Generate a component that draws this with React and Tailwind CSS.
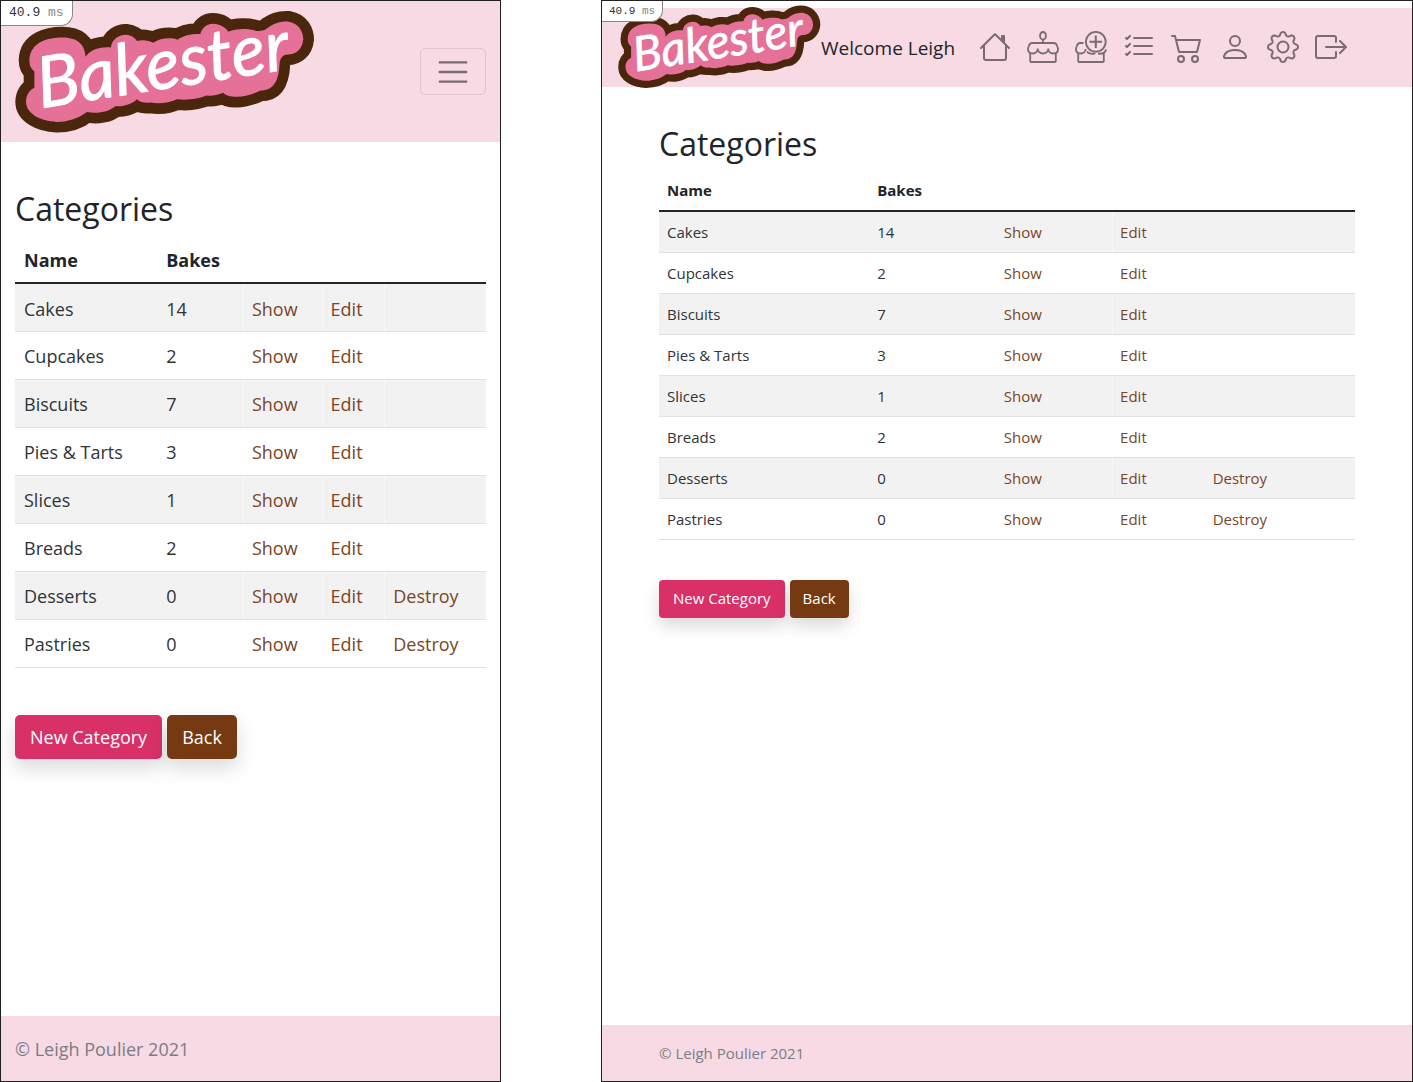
import { BsListCheck, BsCart2, BsPerson, BsGear, BsBoxArrowRight } from "react-icons/bs";

const categories = [
  ["Cakes", 14],
  ["Cupcakes", 2],
  ["Biscuits", 7],
  ["Pies & Tarts", 3],
  ["Slices", 1],
  ["Breads", 2],
  ["Desserts", 0],
  ["Pastries", 0],
];

const bubble =
  "M88 180C90 125 145 112 187 112C228 112 255 130 256 170C270 150 295 139 332 142C335 115 360 103 378 104C396 106 405 115 410 123C425 118 445 120 459 128C480 114 510 111 532 119C548 106 575 101 600 102C604 84 618 71 638 71C658 71 675 82 684 95C705 85 745 84 768 93C785 94 797 90 804 82C825 66 850 64 865 65C895 70 908 95 908 118C905 148 885 163 862 163C848 163 839 172 837 190C835 240 820 271 780 271C760 280 735 290 710 290C690 290 675 286 668 278C650 286 630 288 618 286C595 296 560 301 530 297C505 309 475 312 450 307C435 309 418 306 410 297C395 313 365 320 345 318C325 336 290 341 260 335C235 355 200 365 170 365C120 363 78 340 78 305C78 285 88 270 103 263L103 214C92 205 88 195 88 180Z";

function Logo({ className }) {
  return (
    <svg viewBox="45 30 898 369" overflow="visible" className={className} role="img" aria-label="Bakester">
      <path d={bubble} fill="#4a260d" stroke="#4a260d" strokeWidth="64" strokeLinejoin="round" />
      <path d={bubble} fill="#e57199" />
      <text
        x="122"
        y="324"
        transform="rotate(-9 122 324)"
        fontFamily="Lato, sans-serif"
        fontSize="212"
        fontStyle="italic"
        fontWeight="400"
        fill="#fff"
        stroke="#fff"
        strokeWidth="3"
        strokeLinejoin="round"
      >
        Bakester
      </text>
    </svg>
  );
}

function House() {
  return (
    <svg viewBox="0 0 16 16" fill="currentColor" className="size-8">
      <path d="M2 13.5V7h1v6.5a.5.5 0 0 0 .5.5h9a.5.5 0 0 0 .5-.5V7h1v6.5a1.5 1.5 0 0 1-1.5 1.5h-9A1.5 1.5 0 0 1 2 13.5zm11-11V6l-2-2V2.5a.5.5 0 0 1 .5-.5h1a.5.5 0 0 1 .5.5z" />
      <path d="M7.293 1.5a1 1 0 0 1 1.414 0l6.647 6.646a.5.5 0 0 1-.708.708L8 2.207 1.354 8.854a.5.5 0 1 1-.708-.708L7.293 1.5z" />
    </svg>
  );
}

function Cake() {
  return (
    <svg viewBox="0 0 32 32" fill="none" stroke="currentColor" strokeWidth="1.8" className="size-8">
      <ellipse cx="16" cy="4.800" rx="3" ry="3.800" />
      <path d="M16 8.600V12" />
      <path d="M5 12H27Q29 12 30 14.500Q31 17 31 18.500C31 21.500 28.500 22.500 26 22.500C23.500 22.500 21.300 20.500 21.300 17.500C21.300 20.500 19 22.500 16 22.500C13 22.500 10.700 20.500 10.700 17.500C10.700 20.500 8.500 22.500 6 22.500C3.500 22.500 1 21.500 1 18.500Q1 17 2 14.500Q3 12 5 12Z" />
      <path d="M3.200 22V30Q3.200 31 4.200 31H27.800Q28.800 31 28.800 30V22" />
    </svg>
  );
}

function CakePlus() {
  return (
    <svg viewBox="0 0 32 32" fill="none" stroke="currentColor" strokeWidth="1.8" className="size-8">
      <path d="M8.500 12H5Q3 12 2 14.500Q1 17 1 18.500C1 21.500 3.500 22.500 6 22.500C8.500 22.500 10.700 20.500 10.700 18M12 20.500C13.500 22.800 18 23.500 20.300 22.300" />
      <path d="M23 22.700C26.500 23 30.300 22.500 31 18.500M3.200 22V30Q3.200 31 4.200 31H27.800Q28.800 31 28.800 30V22" />
      <circle cx="20.800" cy="10.800" r="9.900" />
      <path d="M20.800 4.500V17.100M14.500 10.800H27.100" strokeWidth="2" />
    </svg>
  );
}

const navItems = [
  ["Home", House],
  ["Bakes", Cake],
  ["New bake", CakePlus],
  ["Orders", BsListCheck],
  ["Cart", BsCart2],
  ["Account", BsPerson],
  ["Settings", BsGear],
  ["Log out", BsBoxArrowRight],
];

const columns = ["w-[30.2%]", "w-[18.2%]", "w-[16.7%]", "w-[13.3%]", "w-[21.6%]"];

function Rows({ cell, seam }) {
  return categories.map(([name, bakes]) => (
    <tr key={name} className="border-b border-[#dee2e6] text-[#2f3438] odd:bg-[#f2f2f2]">
      <td className={cell}>{name}</td>
      <td className={cell}>{bakes}</td>
      <td className={`${cell} ${seam}`}><a href="#show" className="text-[#7a4526]">Show</a></td>
      <td className={`${cell} shadow-[inset_1px_0_rgba(255,255,255,0.5)]`}><a href="#edit" className="text-[#7a4526]">Edit</a></td>
      <td className={`${cell} ${seam}`}>{bakes === 0 && <a href="#destroy" className="text-[#7a4526]">Destroy</a>}</td>
    </tr>
  ));
}

function Head({ cell }) {
  return (
    <>
      <colgroup>
        {columns.map((w) => <col key={w} className={w} />)}
      </colgroup>
      <thead>
        <tr className="border-b-2 border-[#212529] text-left">
          <th className={cell}>Name</th>
          <th className={cell}>Bakes</th>
          <th colSpan={3} />
        </tr>
      </thead>
    </>
  );
}

function Mobile() {
  return (
    <section className="relative flex flex-[499_1_0] flex-col border border-[#212121] bg-white text-lg">
      <header className="flex items-center justify-between bg-[#f7dae4] px-[14px] py-[9px]">
        <Logo className="w-[300px]" />
        <button aria-label="Menu" className="flex h-[47px] w-[66px] items-center justify-center rounded-[5px] border border-[#dfc4cf]">
          <svg viewBox="0 0 30 30" className="size-9 text-[#7a6b71]" fill="none" stroke="currentColor" strokeWidth="2" strokeLinecap="round">
            <path d="M4 7h22M4 15h22M4 23h22" />
          </svg>
        </button>
      </header>
      <div className="absolute left-0 top-0 rounded-br-xl border-b border-r border-[#888] bg-white px-2 font-['Liberation_Mono',monospace] text-[13px]/6 text-[#333]">
        40.9 <span className="text-[#888]">ms</span>
      </div>
      <main className="px-[14px] pt-[45px]">
        <h1 className="text-[32px]/[44px]">Categories</h1>
        <table className="mt-1 w-full table-fixed border-collapse">
          <Head cell="h-12 px-[9px] pt-0.5" />
          <tbody><Rows cell="h-12 px-[9px] pt-0.5" seam="shadow-[inset_1px_0_rgba(255,255,255,0.5)]" /></tbody>
        </table>
        <div className="mt-[47px] flex gap-[5px] text-white">
          <button className="h-[44px] rounded-[5px] bg-[#d93068] px-[15px] shadow-[0_9px_19px_rgba(0,0,0,0.15)]">New Category</button>
          <button className="h-[44px] rounded-[5px] bg-[#763a12] px-[15px] shadow-[0_9px_19px_rgba(0,0,0,0.15)]">Back</button>
        </div>
      </main>
      <footer className="mt-auto bg-[#f7dae4] px-[14px] pb-[18px] pt-5 text-lg/[27px] text-[#7b7d85]">© Leigh Poulier 2021</footer>
    </section>
  );
}

function Desktop() {
  return (
    <section className="relative flex flex-[810_1_0] flex-col border border-[#212121] bg-white text-[15px]">
      <header className="mt-[7px] flex h-[79px] items-center bg-[#f7dae4] pb-px pl-4">
        <Logo className="w-[203px]" />
        <span className="whitespace-nowrap pt-0.5 text-[19px]">Welcome Leigh</span>
        <nav className="ml-6 flex gap-4 text-[#7a6b71]">
          {navItems.map(([label, Icon]) => (
            <a key={label} href="#nav" aria-label={label}><Icon className="size-8" /></a>
          ))}
        </nav>
      </header>
      <div className="absolute left-0 top-0 rounded-br-xl border-b border-r border-[#888] bg-white px-[7px] font-['Liberation_Mono',monospace] text-[11px]/5 text-[#333]">
        40.9 <span className="text-[#888]">ms</span>
      </div>
      <main className="px-[57px] pt-[35px]">
        <h1 className="text-[32px]/[44px]">Categories</h1>
        <table className="mt-1 w-full table-fixed border-collapse">
          <Head cell="h-[41px] px-2" />
          <tbody><Rows cell="h-[41px] px-2 pt-px" seam="" /></tbody>
        </table>
        <div className="mt-10 flex gap-[5px] text-white">
          <button className="h-[38px] rounded bg-[#d93068] px-[14px] shadow-[0_8px_16px_rgba(0,0,0,0.15)]">New Category</button>
          <button className="h-[38px] rounded bg-[#763a12] px-[13px] shadow-[0_8px_16px_rgba(0,0,0,0.15)]">Back</button>
        </div>
      </main>
      <footer className="mt-auto bg-[#f7dae4] px-[57px] py-4 text-[15px]/6 text-[#7b7d85]">© Leigh Poulier 2021</footer>
    </section>
  );
}

export default function App() {
  return (
    <div className="flex min-h-screen bg-white font-['Open_Sans',sans-serif] text-[#212529]">
      <Mobile />
      <div className="flex-[100_1_0]" />
      <Desktop />
    </div>
  );
}
